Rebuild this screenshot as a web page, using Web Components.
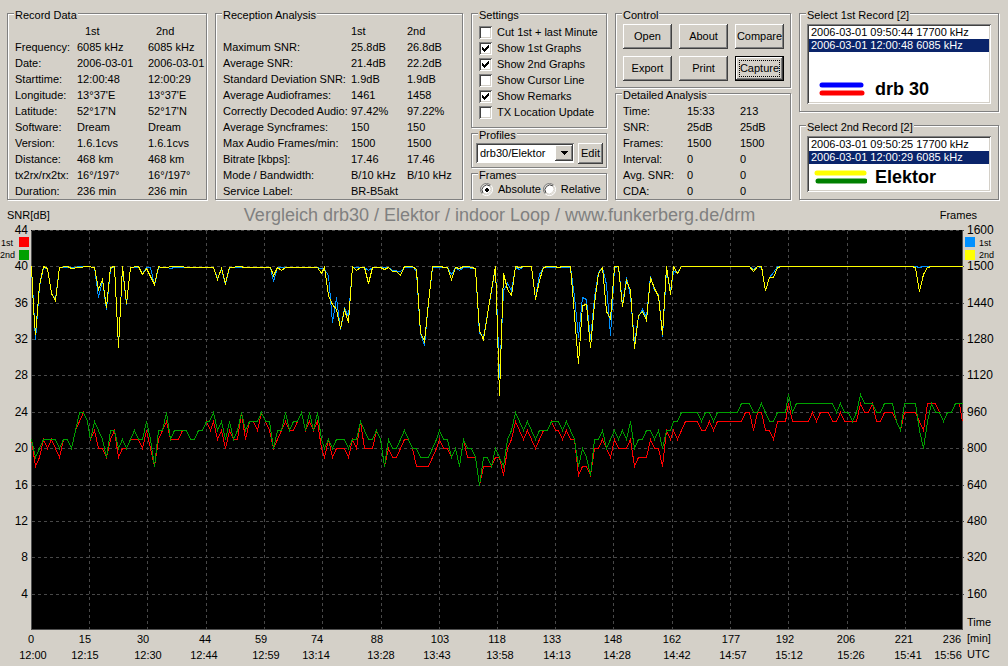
<!DOCTYPE html>
<html lang="en">
<head>
<meta charset="utf-8">
<title>DRM Reception Analysis</title>
<style>
  html, body { margin: 0; }
  body {
    background: #d4d0c8;
    color: #000;
    font: 11px/16px "Liberation Sans", Arial, sans-serif;
  }
</style>
</head>
<body>
<drm-app></drm-app>

<script>
class BaseElement extends HTMLElement {
  render(html) {
    if (!this.shadowRoot) this.attachShadow({ mode: "open" });
    this.shadowRoot.innerHTML = html;
  }
}

/* Etched frame with a caption */
customElements.define("group-box", class extends BaseElement {
  connectedCallback() {
    this.render(`
      <style>
        :host { display: block; }
        fieldset {
          position: relative; box-sizing: border-box; height: 100%; min-width: 0;
          margin: 0; padding: var(--box-padding, 9px 7px 0 7px);
          border: 1px solid #808080;
          box-shadow: 1px 1px 0 #fff, inset 1px 1px 0 #fff;
        }
        legend {
          position: absolute; top: -5px; left: 6px; padding: 0 1px;
          background: #d4d0c8; line-height: 13px; white-space: nowrap;
        }
      </style>
      <fieldset><legend>${this.getAttribute("label")}</legend><slot></slot></fieldset>`);
  }
});

/* Rows are separated by ";", cells by "|" */
customElements.define("data-table", class extends BaseElement {
  connectedCallback() {
    const widths = this.getAttribute("widths").split(" ");
    const head = this.getAttribute("head");
    const rows = this.getAttribute("rows").split(";").map(r => r.split("|"));
    this.render(`
      <style>
        :host { display: block; }
        table { width: 100%; border-collapse: collapse; table-layout: fixed; }
        th, td { padding: 0; height: 16px; text-align: left; font-weight: normal; white-space: nowrap; }
        thead th { padding-left: var(--head-indent, 0); }
      </style>
      <table>
        <colgroup>${widths.map(w => `<col style="width:${w}px">`).join("")}<col></colgroup>
        ${head ? `<thead><tr><td></td>${head.split("|").map(h => `<th scope="col">${h}</th>`).join("")}</tr></thead>` : ""}
        <tbody>${rows.map(([name, ...v]) =>
          `<tr><th scope="row">${name}</th>${v.map(x => `<td>${x}</td>`).join("")}</tr>`).join("")}</tbody>
      </table>`);
  }
});

customElements.define("check-item", class extends BaseElement {
  connectedCallback() {
    const radio = this.getAttribute("type") === "radio";
    this.render(`
      <style>
        :host { display: block; }
        label { display: flex; align-items: center; gap: 5px; height: 16px; white-space: nowrap; }
        .mark { display: grid; width: 13px; height: 13px; }
        input, svg { grid-area: 1 / 1; width: 13px; height: 13px; margin: 0; }
        input {
          appearance: none; background: #fff;
          box-shadow: inset 1px 1px #808080, inset -1px -1px #fff, inset 2px 2px #404040, inset -2px -2px #d4d0c8;
        }
        input[type=radio] { background: none; box-shadow: none; }
        svg { pointer-events: none; }
        .tick { visibility: hidden; }
        input:checked + svg .tick { visibility: visible; }
      </style>
      <label>
        <span class="mark">
          <input type="${radio ? "radio" : "checkbox"}" ${this.hasAttribute("checked") ? "checked" : ""}>
          <svg viewBox="0 0 13 13" aria-hidden="true">${radio ? `
            <circle cx="6.5" cy="6.5" r="5" fill="#fff"/>
            <path d="M2.2 10.8A6 6 0 0 1 10.8 2.2" fill="none" stroke="#808080"/>
            <path d="M3 10A5 5 0 0 1 10 3" fill="none" stroke="#404040"/>
            <path d="M10.8 2.2A6 6 0 0 1 2.2 10.8" fill="none" stroke="#fff"/>
            <path d="M10 3A5 5 0 0 1 3 10" fill="none" stroke="#d4d0c8"/>
            <path class="tick" d="M5 6h1v-1h2v1h1v2h-1v1h-2v-1h-1z" fill="#000"/>` : `
            <path class="tick" d="M3 5v3l2 2 5-5V2L5 7z" fill="#000" shape-rendering="crispEdges"/>`}
          </svg>
        </span>
        <span><slot></slot></span>
      </label>`);
  }
});

customElements.define("push-button", class extends BaseElement {
  connectedCallback() {
    this.render(`
      <style>
        :host { display: block; min-width: 0; }
        button {
          display: block; box-sizing: border-box; width: 100%; height: var(--button-height, 25px);
          margin: 0; padding: 0 0 2px; border: 0; border-radius: 0;
          background: #d4d0c8; color: #000; font: inherit; white-space: nowrap;
          box-shadow: inset -1px -1px #404040, inset 1px 1px #fff, inset -2px -2px #808080;
        }
        :host([active]) button {
          border: 1px solid #000; padding: 0 0 1px;
          outline: 1px dotted #000; outline-offset: -5px;
        }
      </style>
      <button type="button"><slot></slot></button>`);
  }
});

customElements.define("combo-box", class extends BaseElement {
  connectedCallback() {
    this.render(`
      <style>
        :host { display: block; }
        .field {
          display: grid; grid-template-columns: 1fr 18px; height: 20px; background: #fff; padding: 2px 1px 2px 2px;
          box-sizing: border-box;
          box-shadow: inset 1px 1px #808080, inset -1px -1px #fff, inset 2px 2px #404040;
        }
        select {
          grid-area: 1 / 1 / 2 / 3; appearance: none; border: 0; border-radius: 0; margin: 0;
          padding: 0 0 0 2px; background: none; color: #000; font: inherit; min-width: 0;
        }
        .arrow {
          grid-area: 1 / 2; display: grid; place-items: center; pointer-events: none; background: #d4d0c8;
          box-shadow: inset -1px -1px #404040, inset 1px 1px #fff, inset -2px -2px #808080;
        }
      </style>
      <div class="field">
        <select aria-label="${this.getAttribute("label")}"><option>${this.getAttribute("value")}</option></select>
        <span class="arrow"><svg width="7" height="4" viewBox="0 0 7 4" aria-hidden="true" shape-rendering="crispEdges"><path d="M0 0h7L3.500 4z"/></svg></span>
      </div>`);
  }
});

/* List of recordings with a colour key drawn over its lower part */
customElements.define("record-list", class extends BaseElement {
  connectedCallback() {
    const items = this.getAttribute("items").split("|");
    this.render(`
      <style>
        :host { display: block; position: relative; height: var(--list-height); }
        select {
          display: block; box-sizing: border-box; width: 100%; height: 100%; margin: 0; padding: 2px;
          border: 0; border-radius: 0; background: #fff; font: inherit; overflow: hidden; outline: 0;
          box-shadow: inset 1px 1px #808080, inset -1px -1px #fff, inset 2px 2px #404040, inset -2px -2px #d4d0c8;
        }
        option { height: 13px; min-height: 0; padding: 0 2px; line-height: 13px; color: #000; white-space: nowrap; }
        option:checked { background: #0a246a linear-gradient(#0a246a, #0a246a) !important; color: #fff !important; }
        .key {
          position: absolute; left: 6px; right: 4px; bottom: 5px; display: flex; align-items: center; gap: 8px;
          font: bold 18px/20px "Liberation Sans", Arial, sans-serif; pointer-events: none;
        }
      </style>
      <select size="4" aria-label="${this.getAttribute("label")}">
        ${items.map((t, i) => `<option ${i === 1 ? "selected" : ""}>${t}</option>`).join("")}
      </select>
      <div class="key"><slot></slot></div>`);
  }
});

customElements.define("reception-chart", class extends BaseElement {
  connectedCallback() {
    const W = 932, H = 400;
    const grid = [58, 116, 175, 233, 291, 350, 408, 466, 524, 582, 641, 699, 757, 816, 874];
    const minutes = [[0,0],[54,15],[112,30],[174,44],[230,59],[286,74],[346,88],[409,103],[466,118],[521,133],[582,148],[641,162],[700,177],[754,192],[815,206],[873,221],[921,236]];
    const clock = [[2,"12:00"],[54,"12:15"],[117,"12:30"],[173,"12:44"],[235,"12:59"],[285,"13:14"],[350,"13:28"],[406,"13:43"],[469,"13:58"],[526,"14:13"],[586,"14:28"],[646,"14:42"],[702,"14:57"],[758,"15:12"],[820,"15:26"],[877,"15:41"],[917,"15:56"]];

    /* SNR series: plot x, level in dB */
    const snr2 = "0,21 4,19 8,20 12,21 24,21 28,20 32,21 36,21 40,20 44,22 48,24 52,24 56,23 59,21 63,23 67,22 71,21 75,19 79,22 83,22 87,20 91,21 95,20 99,21 103,22 107,21 111,21 115,23 119,21 123,18 127,22 131,22 135,24 139,21 143,22 155,22 159,21 163,21 167,22 171,22 175,23 178,23 182,24 186,22 190,23 194,21 198,23 202,21 206,22 210,24 214,22 218,23 226,23 230,24 234,23 238,23 242,20 246,22 250,22 254,24 258,22 262,23 266,23 270,24 274,22 278,24 282,22 286,24 290,21 293,20 297,21 301,20 305,21 313,21 317,20 321,21 325,21 329,23 333,22 337,21 341,21 345,22 349,21 353,18 357,21 361,20 365,20 369,21 373,22 377,21 381,20 385,20 389,19 397,19 401,20 405,21 408,22 412,21 416,21 420,19 424,20 428,18 432,21 436,20 440,20 444,19 448,16 452,19 456,19 460,18 464,20 468,19 472,18 476,21 480,22 484,24 488,23 492,22 496,23 500,22 504,21 508,22 516,22 520,23 527,23 531,22 535,23 539,22 543,21 547,18 551,20 555,19 559,17 563,21 567,21 571,22 575,20 579,21 583,22 587,21 591,22 595,21 599,23 603,20 607,21 611,21 615,22 619,22 623,21 627,22 631,20 635,22 639,22 642,23 646,23 650,24 666,24 670,23 674,24 678,24 682,23 686,24 706,24 710,25 718,25 722,24 726,24 730,25 734,24 738,23 742,23 746,24 754,24 757,26 761,24 765,25 801,25 805,24 809,25 813,24 817,24 821,23 825,24 829,26 833,25 841,25 845,24 849,24 853,25 861,25 865,23 869,22 873,25 884,25 888,22 892,20 896,23 900,25 904,24 908,24 912,23 916,24 920,24 924,25 931,25";
    const snr1 = "0,21 4,18 8,19 12,21 16,20 20,21 24,20 28,19 32,21 36,21 40,20 44,22 48,23 52,24 56,23 59,21 63,22 67,20 71,20 75,19 79,21 83,22 87,19 91,20 95,20 99,21 107,21 111,20 115,22 119,20 123,18 127,21 131,22 135,23 139,21 147,21 151,22 155,22 159,21 163,21 167,22 171,22 175,23 179,22 182,23 186,21 190,22 194,20 198,22 202,21 206,21 210,24 214,21 218,23 222,23 226,22 230,24 238,22 242,20 246,21 254,23 258,22 262,22 266,23 270,24 274,22 278,23 282,22 286,23 290,20 293,19 297,21 301,19 305,20 313,20 317,19 321,21 325,20 329,23 333,20 341,20 345,22 349,21 353,18 357,20 361,19 365,19 369,20 373,21 377,21 381,20 385,18 397,18 401,19 405,20 408,21 412,20 416,20 420,19 424,20 428,18 432,21 436,19 444,19 448,16 452,18 460,18 464,19 468,19 472,17 476,20 480,21 484,23 488,22 492,21 496,22 500,21 504,20 508,21 512,22 516,22 520,23 524,22 527,22 531,21 535,22 539,21 543,21 547,17 551,18 555,18 559,17 563,20 567,20 571,21 575,20 579,19 583,21 587,20 595,20 599,21 603,18 607,19 615,19 619,21 623,20 627,20 631,18 635,22 639,21 642,22 646,21 650,22 654,23 666,23 670,22 674,22 678,23 682,22 686,23 710,23 714,24 718,24 722,22 726,24 730,24 734,22 738,22 742,21 746,23 754,23 757,25 761,23 777,23 781,24 785,23 789,24 797,24 801,23 805,23 809,24 813,23 825,23 829,25 833,24 837,24 841,25 845,23 849,23 853,24 861,24 865,23 869,22 873,24 884,24 888,23 892,22 896,25 904,25 908,24 912,23 916,24 920,24 924,25 928,25 931,23";
    /* Frame-count series: plot x, plot y */
    const frames2 = "0,36 2,78 4,104 8,55 12,36 16,38 20,63 24,70 28,37 36,36 40,38 56,36 63,37 67,59 71,49 75,77 79,37 83,36 87,117 91,36 95,73 99,37 107,36 111,44 115,38 123,54 127,36 130,37 146,36 159,37 182,37 186,49 190,38 194,53 198,37 209,36 213,37 239,37 242,45 246,37 250,40 254,37 286,37 290,43 293,37 297,65 301,74 305,79 309,98 313,79 317,92 321,36 325,40 329,37 333,37 337,53 341,37 349,37 353,39 357,37 361,41 365,41 369,45 373,36 381,36 385,39 389,102 393,111 397,72 401,36 410,36 412,37 416,37 420,49 424,37 428,38 432,36 437,36 440,37 444,38 448,100 452,109 456,84 464,36 468,165 472,43 476,59 480,65 484,36 488,37 492,36 500,36 504,69 508,50 512,37 516,36 523,36 527,37 531,36 539,36 543,85 547,133 551,75 555,74 559,117 563,73 567,43 571,37 575,81 579,88 583,36 587,36 591,76 595,50 599,60 603,118 607,85 611,81 615,90 619,47 623,58 627,66 631,104 635,36 639,64 642,36 646,43 650,36 718,36 722,41 726,36 730,36 734,60 738,47 742,47 746,37 750,36 880,36 884,37 888,61 892,44 896,37 900,36 931,36";
    const frames1 = "0,38 4,109 8,56 12,37 16,38 20,63 24,69 28,37 36,37 56,36 63,37 67,67 71,50 75,79 79,38 83,36 87,116 91,37 95,74 99,37 107,37 111,43 115,37 119,37 123,55 127,37 136,37 139,38 143,37 182,37 186,48 190,38 194,54 198,37 239,37 242,51 246,37 254,37 286,37 293,39 297,45 301,92 305,67 309,99 313,78 317,86 321,37 333,37 337,40 341,37 357,37 361,40 369,41 373,37 382,37 385,41 389,103 393,115 397,72 401,37 416,37 420,44 424,37 428,40 432,37 444,38 448,103 452,107 464,37 468,147 472,60 476,53 480,60 484,37 488,39 492,36 500,36 504,68 508,44 512,37 539,37 543,66 547,107 551,67 555,69 559,109 563,67 567,42 571,37 575,54 579,105 583,37 587,36 591,74 595,47 599,66 603,112 607,86 611,79 615,87 619,46 623,60 627,64 631,106 635,40 639,60 642,41 646,42 650,36 718,36 722,39 726,36 730,37 734,60 738,47 742,42 746,36 884,36 888,37 892,36 931,36";
    const toPlot = s => s.split(" ").map(p => {
      const [x, db] = p.split(",");
      return x + "," + Math.round((44 - db) * H / 44);
    }).join(" ");
    const pct = (v, max) => (v / max * 100).toFixed(2) + "%";
    const levels = [44, 40, 36, 32, 28, 24, 20, 16, 12, 8, 4];
    const right = [1600, 1500, 1440, 1280, 1120, 960, 800, 640, 480, 320, 160];
    const line = (pts, c) => `<polyline points="${pts}" stroke="${c}"/>`;

    this.render(`
      <style>
        :host { display: flex; flex-direction: column; }
        header { display: grid; grid-template-columns: 1fr auto 1fr; align-items: center; height: 30px; padding-right: 9px; }
        .left-title { padding-left: 7px; }
        .right-title { padding-right: 22px; text-align: right; }
        h1 { margin: 0; color: #808080; font: 18px/20px "Liberation Sans", Arial, sans-serif; white-space: nowrap; }
        .body { flex: 1; display: grid; grid-template-columns: 31px 1fr 45px; grid-template-rows: minmax(300px, 1fr) 36px; }
        .axis { position: relative; }
        svg { display: block; width: 100%; height: 100%; overflow: visible; }
        .frame { min-height: 0; position: relative; background: #000; }
        .frame svg { position: absolute; inset: 0; }
        text { dominant-baseline: central; fill: #000; font-size: 12px; }
        .small text, text.small { font-size: 11px; }
        .key { font-size: 9px; }
        .series polyline { fill: none; stroke-width: 1; vector-effect: non-scaling-stroke; }
        .grid line { stroke: #484848; stroke-dasharray: 3 3; vector-effect: non-scaling-stroke; }
        .units { display: grid; grid-template-rows: 16px 16px; padding-left: 4px; }
      </style>
      <header>
        <span class="left-title">SNR[dB]</span>
        <h1>Vergleich drb30 / Elektor / indoor Loop / www.funkerberg.de/drm</h1>
        <span class="right-title">Frames</span>
      </header>
      <div class="body">
        <div class="axis"><svg>
          ${levels.map(v => `<text x="28" y="${pct(44 - v, 44)}" text-anchor="end">${v}</text>`).join("")}
          <text class="key" x="1" y="13">1st</text><rect x="19" y="7" width="10" height="10" fill="#f00"/>
          <text class="key" x="0" y="25">2nd</text><rect x="19" y="20" width="10" height="10" fill="#00a000"/>
        </svg></div>
        <div class="frame"><svg viewBox="0 0 ${W} ${H}" preserveAspectRatio="none" shape-rendering="crispEdges" role="img" aria-label="SNR and frame counts over time">
          <g transform="translate(.5 .5)">
            <g class="grid">
              ${levels.map(v => Math.round((44 - v) * H / 44)).map(y => `<line x1="0" x2="${W}" y1="${y}" y2="${y}"/>`).join("")}
              ${grid.map(x => `<line x1="${x}" x2="${x}" y1="0" y2="${H}"/>`).join("")}
            </g>
            <path d="M0 0V399H931V0" fill="none" stroke="#505050"/>
            <g class="series">
              ${line(toPlot(snr1), "#f00")}${line(toPlot(snr2), "#00a000")}
              ${line(frames1, "#0090ff")}${line(frames2, "#ff0")}
            </g>
          </g>
        </svg></div>
        <div class="axis"><svg>
          ${right.map((v, i) => `<text x="4" y="${pct(i, 11)}">${v}</text>`).join("")}
          <rect x="2" y="7" width="10" height="10" fill="#0090ff"/><text class="key" x="16" y="13">1st</text>
          <rect x="2" y="20" width="10" height="10" fill="#ff0"/><text class="key" x="16" y="25">2nd</text>
          <text class="small" x="4" y="98%">Time</text>
        </svg></div>
        <div></div>
        <div class="axis small"><svg>
          ${minutes.map(([x, t]) => `<text x="${pct(x, W)}" y="9" text-anchor="middle">${t}</text>`).join("")}
          ${clock.map(([x, t]) => `<text x="${pct(x, W)}" y="25" text-anchor="middle">${t}</text>`).join("")}
        </svg></div>
        <div class="units"><span>[min]</span><span>UTC</span></div>
      </div>`);
  }
});

customElements.define("drm-app", class extends BaseElement {
  connectedCallback() {
    this.render(`
      <style>
        :host { display: flex; flex-direction: column; min-height: 100vh; }
        .panels {
          display: grid; grid-template-columns: 200fr 248fr 136fr 176fr 200fr; gap: 8px;
          padding: 13px 9px 0 7px;
        }
        .panels > * { min-width: 0; }
        .stack { display: flex; flex-direction: column; gap: 5px; }
        .stack > :last-child { flex: 1; }
        .record { --head-indent: 8px; }
        .settings { --box-padding: 10px 7px 7px; }
        .profiles { --box-padding: 9px 3px 3px 4px; }
        .line { display: grid; grid-template-columns: 1fr 25px; gap: 4px; --button-height: 21px; }
        .frames { --box-padding: 7px 7px 2px 8px; }
        .radios { display: flex; gap: 2px; }
        .control { --box-padding: 10px 6px 6px 7px; }
        .buttons { display: grid; grid-template-columns: repeat(3, 1fr); gap: 7px; }
        .lists { gap: 13px; }
        .list { --box-padding: 10px 7px 7px; }
        .first { --list-height: 80px; }
        .second { --list-height: 56px; }
        reception-chart { flex: 1; }
      </style>
      <div class="panels">
        <group-box class="record" label="Record Data">
          <data-table widths="62 71" head="1st|2nd" rows="Frequency:|6085 kHz|6085 kHz;Date:|2006-03-01|2006-03-01;Starttime:|12:00:48|12:00:29;Longitude:|13°37'E|13°37'E;Latitude:|52°17'N|52°17'N;Software:|Dream|Dream;Version:|1.6.1cvs|1.6.1cvs;Distance:|468 km|468 km;tx2rx/rx2tx:|16°/197°|16°/197°;Duration:|236 min|236 min"></data-table>
        </group-box>
        <group-box label="Reception Analysis">
          <data-table widths="128 56" head="1st|2nd" rows="Maximum SNR:|25.8dB|26.8dB;Average SNR:|21.4dB|22.2dB;Standard Deviation SNR:|1.9dB|1.9dB;Average Audioframes:|1461|1458;Correctly Decoded Audio:|97.42%|97.22%;Average Syncframes:|150|150;Max Audio Frames/min:|1500|1500;Bitrate [kbps]:|17.46|17.46;Mode / Bandwidth:|B/10 kHz|B/10 kHz;Service Label:|BR-B5akt|"></data-table>
        </group-box>
        <div class="stack">
          <group-box class="settings" label="Settings">
            <check-item>Cut 1st + last Minute</check-item>
            <check-item checked>Show 1st Graphs</check-item>
            <check-item checked>Show 2nd Graphs</check-item>
            <check-item>Show Cursor Line</check-item>
            <check-item checked>Show Remarks</check-item>
            <check-item>TX Location Update</check-item>
          </group-box>
          <group-box class="profiles" label="Profiles">
            <div class="line">
              <combo-box label="Profile" value="drb30/Elektor"></combo-box>
              <push-button>Edit</push-button>
            </div>
          </group-box>
          <group-box class="frames" label="Frames">
            <div class="radios">
              <check-item type="radio" checked>Absolute</check-item>
              <check-item type="radio">Relative</check-item>
            </div>
          </group-box>
        </div>
        <div class="stack">
          <group-box class="control" label="Control">
            <div class="buttons">
              <push-button>Open</push-button>
              <push-button>About</push-button>
              <push-button>Compare</push-button>
              <push-button>Export</push-button>
              <push-button>Print</push-button>
              <push-button active>Capture</push-button>
            </div>
          </group-box>
          <group-box label="Detailed Analysis">
            <data-table widths="64 53" rows="Time:|15:33|213;SNR:|25dB|25dB;Frames:|1500|1500;Interval:|0|0;Avg. SNR:|0|0;CDA:|0|0"></data-table>
          </group-box>
        </div>
        <div class="stack lists">
          <group-box class="list" label="Select 1st Record [2]">
            <record-list class="first" label="1st record" items="2006-03-01 09:50:44 17700 kHz|2006-03-01 12:00:48 6085 kHz">
              <svg width="54" height="16" viewBox="0 0 54 16" fill="none" stroke-width="5" stroke-linecap="round" aria-hidden="true"><path d="M9 4H48" stroke="#00f"/><path d="M9 12H49" stroke="#f00"/></svg>
              <span>drb 30</span>
            </record-list>
          </group-box>
          <group-box class="list" label="Select 2nd Record [2]">
            <record-list class="second" label="2nd record" items="2006-03-01 09:50:25 17700 kHz|2006-03-01 12:00:29 6085 kHz">
              <svg width="54" height="16" viewBox="0 0 54 16" fill="none" stroke-width="5" stroke-linecap="round" aria-hidden="true"><path d="M4 4H51" stroke="#ff0"/><path d="M5 12H52" stroke="#008000"/></svg>
              <span>Elektor</span>
            </record-list>
          </group-box>
        </div>
      </div>
      <reception-chart></reception-chart>`);
  }
});
</script>
</body>
</html>
